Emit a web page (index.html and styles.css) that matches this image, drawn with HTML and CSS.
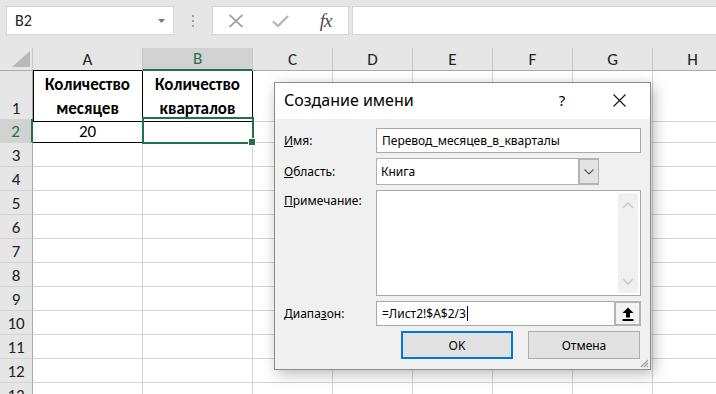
FILE: index.html
```html
<!DOCTYPE html>
<html lang="ru">
<head>
<meta charset="utf-8">
<title>Создание имени</title>
<link rel="stylesheet" href="styles.css">
</head>
<body>
<div class="fbar">
  <div class="namebox"><span>B2</span><svg class="nb-arrow" width="7" height="4" viewBox="0 0 7 4"><path d="M0 0h7L3.5 4z" fill="#7a7a7a"/></svg></div>
  <div class="grip"><i></i><i></i><i></i></div>
  <div class="fbtns">
    <span class="fb"><svg width="16" height="14" viewBox="0 0 16 14"><path d="M1.5 1l13 12M14.5 1l-13 12" stroke="#a6a6a6" stroke-width="1.8" fill="none"/></svg></span>
    <span class="fb"><svg width="17" height="12" viewBox="0 0 17 12"><path d="M1 6.5l5 4.5L16 1" stroke="#b3b3b3" stroke-width="2.2" fill="none"/></svg></span>
    <span class="fb fx">fx</span>
  </div>
  <div class="finput"></div>
</div>

<div class="sheet">
  <div class="row hdr">
    <div class="corner"><svg width="18" height="16" viewBox="0 0 18 16"><path d="M18 0V16H0z" fill="#b8b8b8"/></svg></div>
    <div class="ch">A</div><div class="ch sel">B</div><div class="ch">C</div><div class="ch">D</div><div class="ch">E</div><div class="ch">F</div><div class="ch">G</div><div class="ch">H</div>
  </div>
  <div class="row r1">
    <div class="rh">1</div>
    <div class="c tb ta1">Количество<br>месяцев</div><div class="c tb">Количество<br>кварталов</div>
    <div class="c"></div><div class="c"></div><div class="c"></div><div class="c"></div><div class="c"></div><div class="c"></div>
  </div>
  <div class="row">
    <div class="rh sel">2</div>
    <div class="c tb ta2">20</div><div class="c tb active"></div>
    <div class="c"></div><div class="c"></div><div class="c"></div><div class="c"></div><div class="c"></div><div class="c"></div>
  </div>
  <div class="row"><div class="rh">3</div><div class="c"></div><div class="c"></div><div class="c"></div><div class="c"></div><div class="c"></div><div class="c"></div><div class="c"></div><div class="c"></div></div>
  <div class="row"><div class="rh">4</div><div class="c"></div><div class="c"></div><div class="c"></div><div class="c"></div><div class="c"></div><div class="c"></div><div class="c"></div><div class="c"></div></div>
  <div class="row"><div class="rh">5</div><div class="c"></div><div class="c"></div><div class="c"></div><div class="c"></div><div class="c"></div><div class="c"></div><div class="c"></div><div class="c"></div></div>
  <div class="row"><div class="rh">6</div><div class="c"></div><div class="c"></div><div class="c"></div><div class="c"></div><div class="c"></div><div class="c"></div><div class="c"></div><div class="c"></div></div>
  <div class="row"><div class="rh">7</div><div class="c"></div><div class="c"></div><div class="c"></div><div class="c"></div><div class="c"></div><div class="c"></div><div class="c"></div><div class="c"></div></div>
  <div class="row"><div class="rh">8</div><div class="c"></div><div class="c"></div><div class="c"></div><div class="c"></div><div class="c"></div><div class="c"></div><div class="c"></div><div class="c"></div></div>
  <div class="row"><div class="rh">9</div><div class="c"></div><div class="c"></div><div class="c"></div><div class="c"></div><div class="c"></div><div class="c"></div><div class="c"></div><div class="c"></div></div>
  <div class="row"><div class="rh">10</div><div class="c"></div><div class="c"></div><div class="c"></div><div class="c"></div><div class="c"></div><div class="c"></div><div class="c"></div><div class="c"></div></div>
  <div class="row"><div class="rh">11</div><div class="c"></div><div class="c"></div><div class="c"></div><div class="c"></div><div class="c"></div><div class="c"></div><div class="c"></div><div class="c"></div></div>
  <div class="row"><div class="rh">12</div><div class="c"></div><div class="c"></div><div class="c"></div><div class="c"></div><div class="c"></div><div class="c"></div><div class="c"></div><div class="c"></div></div>
  <div class="row"><div class="rh">13</div><div class="c"></div><div class="c"></div><div class="c"></div><div class="c"></div><div class="c"></div><div class="c"></div><div class="c"></div><div class="c"></div></div>
</div>

<div class="dialog">
  <div class="dtitle">
    <span class="dt-text">Создание имени</span>
    <span class="dt-help">?</span>
    <span class="dt-close"><svg width="13" height="13" viewBox="0 0 13 13"><path d="M0.5 0.5l12 12M12.5 0.5l-12 12" stroke="#111" stroke-width="1.1" fill="none"/></svg></span>
  </div>
  <div class="dbody">
    <div class="lbl"><u>И</u>мя:</div>
    <div class="field input">Перевод_месяцев_в_кварталы</div>

    <div class="lbl"><u>О</u>бласть:</div>
    <div class="combo">
      <span class="combo-val">Книга</span>
      <span class="combo-btn"><svg width="10" height="6" viewBox="0 0 10 6"><path d="M0.5 0.5L5 5l4.5-4.5" stroke="#555" stroke-width="1.1" fill="none"/></svg></span>
    </div>

    <div class="lbl lbl-top"><u>П</u>римечание:</div>
    <div class="field memo">
      <div class="vscroll">
        <svg width="12" height="7" viewBox="0 0 12 7"><path d="M1 6l5-5 5 5" stroke="#c4c4c4" stroke-width="1.3" fill="none"/></svg>
        <svg width="12" height="7" viewBox="0 0 12 7"><path d="M1 1l5 5 5-5" stroke="#c4c4c4" stroke-width="1.3" fill="none"/></svg>
      </div>
    </div>

    <div class="lbl">Диапа<u>з</u>он:</div>
    <div class="field input range">
      <span class="range-val">=Лист2!$A$2/3<i class="caret"></i></span>
      <span class="collapse"><svg width="12" height="14" viewBox="0 0 12 14"><path d="M6 0.5L11.5 6H8v4.5H4V6H0.5z" fill="#000"/><rect x="0.5" y="12" width="11" height="2" fill="#000"/></svg></span>
    </div>

    <div></div>
    <div class="btns">
      <button class="btn default">OK</button>
      <button class="btn">Отмена</button>
    </div>
  </div>
  <svg class="rgrip" width="10" height="10" viewBox="0 0 10 10"><path d="M9 2L2 9M9 5L5 9M9 8L8 9" stroke="#a0a0a0" stroke-width="1.2"/></svg>
</div>
</body>
</html>
```

FILE: styles.css
```css
* { box-sizing: border-box; margin: 0; padding: 0; }
html, body { width: 716px; height: 394px; overflow: hidden; }
body {
  background: #fff;
  font-family: Carlito, Lato, "Liberation Sans", sans-serif;
  color: #222;
  position: relative;
}

/* formula bar */
.fbar {
  height: 48px;
  background: #e6e6e6;
  display: flex;
  align-items: flex-start;
  padding: 6px 0 0 6px;
}
.namebox {
  width: 168px;
  height: 29px;
  background: #fff;
  border: 1px solid #d6d6d6;
  display: flex;
  align-items: center;
  justify-content: space-between;
  padding: 0 8px 0 8px;
  font-size: 16px;
  color: #222;
}
.nb-arrow { margin-top: 1px; }
.grip {
  width: 38px;
  height: 29px;
  display: flex;
  flex-direction: column;
  align-items: center;
  justify-content: center;
  gap: 3px;
}
.grip i { display: block; width: 2px; height: 2px; background: #a0a0a0; }
.fbtns {
  width: 137px;
  height: 29px;
  background: #fff;
  border: 1px solid #d6d6d6;
  display: flex;
  align-items: center;
}
.fb {
  width: 45px;
  height: 27px;
  display: flex;
  align-items: center;
  justify-content: center;
}
.fx {
  font-family: "Liberation Serif", serif;
  font-style: italic;
  font-size: 19px;
  color: #4a4a4a;
  letter-spacing: -1px;
}
.finput {
  flex: 1;
  height: 29px;
  margin-left: 3px;
  background: #fff;
  border: 1px solid #d6d6d6;
  border-right: none;
}

/* sheet */
.row {
  display: grid;
  grid-template-columns: 33px 110px 110px 80px 80px 80px 80px 80px 80px;
  height: 24px;
}
.row.hdr { height: 23px; }
.row.r1 { height: 48px; }
.corner {
  background: #e6e6e6;
  border-right: 1px solid #c8c8c8;
  border-bottom: 1px solid #ababab;
  display: flex;
  align-items: flex-end;
  justify-content: flex-end;
  padding: 0 2px 3px 0;
}
.ch {
  background: #e6e6e6;
  border-right: 1px solid #c8c8c8;
  border-bottom: 1px solid #ababab;
  display: flex;
  align-items: center;
  justify-content: center;
  font-size: 17px;
  color: #222;
}
.ch:nth-child(2) { border-bottom-color: #000; }
.ch.sel {
  background: #d2d2d2;
  color: #217346;
  border-bottom: 2px solid #217346;
}
.rh {
  background: #e6e6e6;
  border-right: 1px solid #ababab;
  border-bottom: 1px solid #d2d2d2;
  display: flex;
  align-items: center;
  justify-content: center;
  padding-top: 1px;
  font-size: 17px;
  color: #222;
}
.r1 .rh { align-items: flex-end; padding-bottom: 2px; }
.rh.sel {
  background: #d2d2d2;
  color: #217346;
  border-right: 2px solid #217346;
}
.c {
  border-right: 1px solid #d4d4d4;
  border-bottom: 1px solid #d4d4d4;
  display: flex;
  align-items: center;
  justify-content: center;
  text-align: center;
  font-size: 17px;
  color: #000;
  padding-top: 1px;
}
.r1 .c.tb {
  font-weight: bold;
  line-height: 24px;
  align-items: flex-start;
  padding-top: 2px;
}
.c.tb { border-right-color: #000; border-bottom-color: #000; }
.ta1 { box-shadow: inset 1px 0 #000; }
.active { position: relative; }
.active::after {
  content: "";
  position: absolute;
  left: -1px; top: -2px; right: -2px; bottom: -2px;
  border: 2px solid #217346;
}
.active::before {
  content: "";
  position: absolute;
  right: -4px; bottom: -4px;
  width: 6px; height: 6px;
  background: #217346;
  border: 1px solid #fff;
  z-index: 2;
}

/* dialog */
.dialog {
  position: absolute;
  left: 274px;
  top: 82px;
  width: 377px;
  height: 288px;
  border: 1px solid #8c8c8c;
  background: #f0f0f0;
  box-shadow: 3px 4px 14px rgba(0, 0, 0, 0.28);
  font-family: "Noto Sans", "Open Sans", sans-serif;
  font-size: 12px;
  color: #000;
  display: flex;
  flex-direction: column;
}
.dtitle {
  height: 36px;
  background: #fff;
  display: flex;
  align-items: center;
  padding-left: 9px;
  padding-bottom: 2px;
  font-size: 16px;
}
.dt-text { flex: 1; }
.dt-help { width: 20px; text-align: center; margin-right: 41px; font-size: 15px; }
.dt-close { width: 13px; height: 13px; margin-right: 24px; display: flex; }
.dbody {
  flex: 1;
  padding: 9px 9px 10px 9px;
  display: grid;
  grid-template-columns: 92px 265px;
  grid-template-rows: 25px 27px 106px 25px 28px;
  row-gap: 5px;
}
.lbl { display: flex; align-items: center; }
.lbl-top { align-items: flex-start; padding-top: 2px; }
.field {
  background: #fff;
  border: 1px solid #a8a8a8;
}
.input {
  display: flex;
  align-items: center;
  padding-left: 5px;
}
.combo {
  width: 223px;
  display: flex;
  background: #fff;
  border: 1px solid #b0b0b0;
}
.combo-val { flex: 1; display: flex; align-items: center; padding-left: 4px; }
.combo-btn {
  width: 21px;
  background: #e3e3e3;
  border: 2px solid #b4b4b4;
  border-right: 1px solid #b4b4b4;
  margin: -1px -1px -1px 0;
  display: flex;
  align-items: center;
  justify-content: center;
}
.memo { position: relative; display: flex; justify-content: flex-end; padding: 2px 2px 2px 0; }
.vscroll {
  width: 20px;
  background: #f0f0f0;
  display: flex;
  flex-direction: column;
  justify-content: space-between;
  align-items: center;
  padding: 9px 0 8px;
}
.range { padding-right: 0; }
.range-val { flex: 1; display: flex; align-items: center; }
.caret { display: inline-block; width: 1px; height: 15px; background: #000; margin-left: 1px; }
.collapse {
  width: 27px;
  height: 25px;
  margin: -1px -1px -1px 0;
  background: #f2f2f2;
  border: 2px solid #b4b4b4;
  display: flex;
  align-items: center;
  justify-content: center;
}
.btns {
  display: flex;
  justify-content: flex-end;
  gap: 15px;
  padding-right: 1px;
}
.btn {
  width: 112px;
  height: 28px;
  background: #e1e1e1;
  border: 1px solid #adadad;
  font-family: "Noto Sans", "Open Sans", sans-serif;
  font-size: 12px;
  color: #000;
}
.btn.default { border: 2px solid #0078d7; }
.rgrip { position: absolute; right: 1px; bottom: 1px; }
```
